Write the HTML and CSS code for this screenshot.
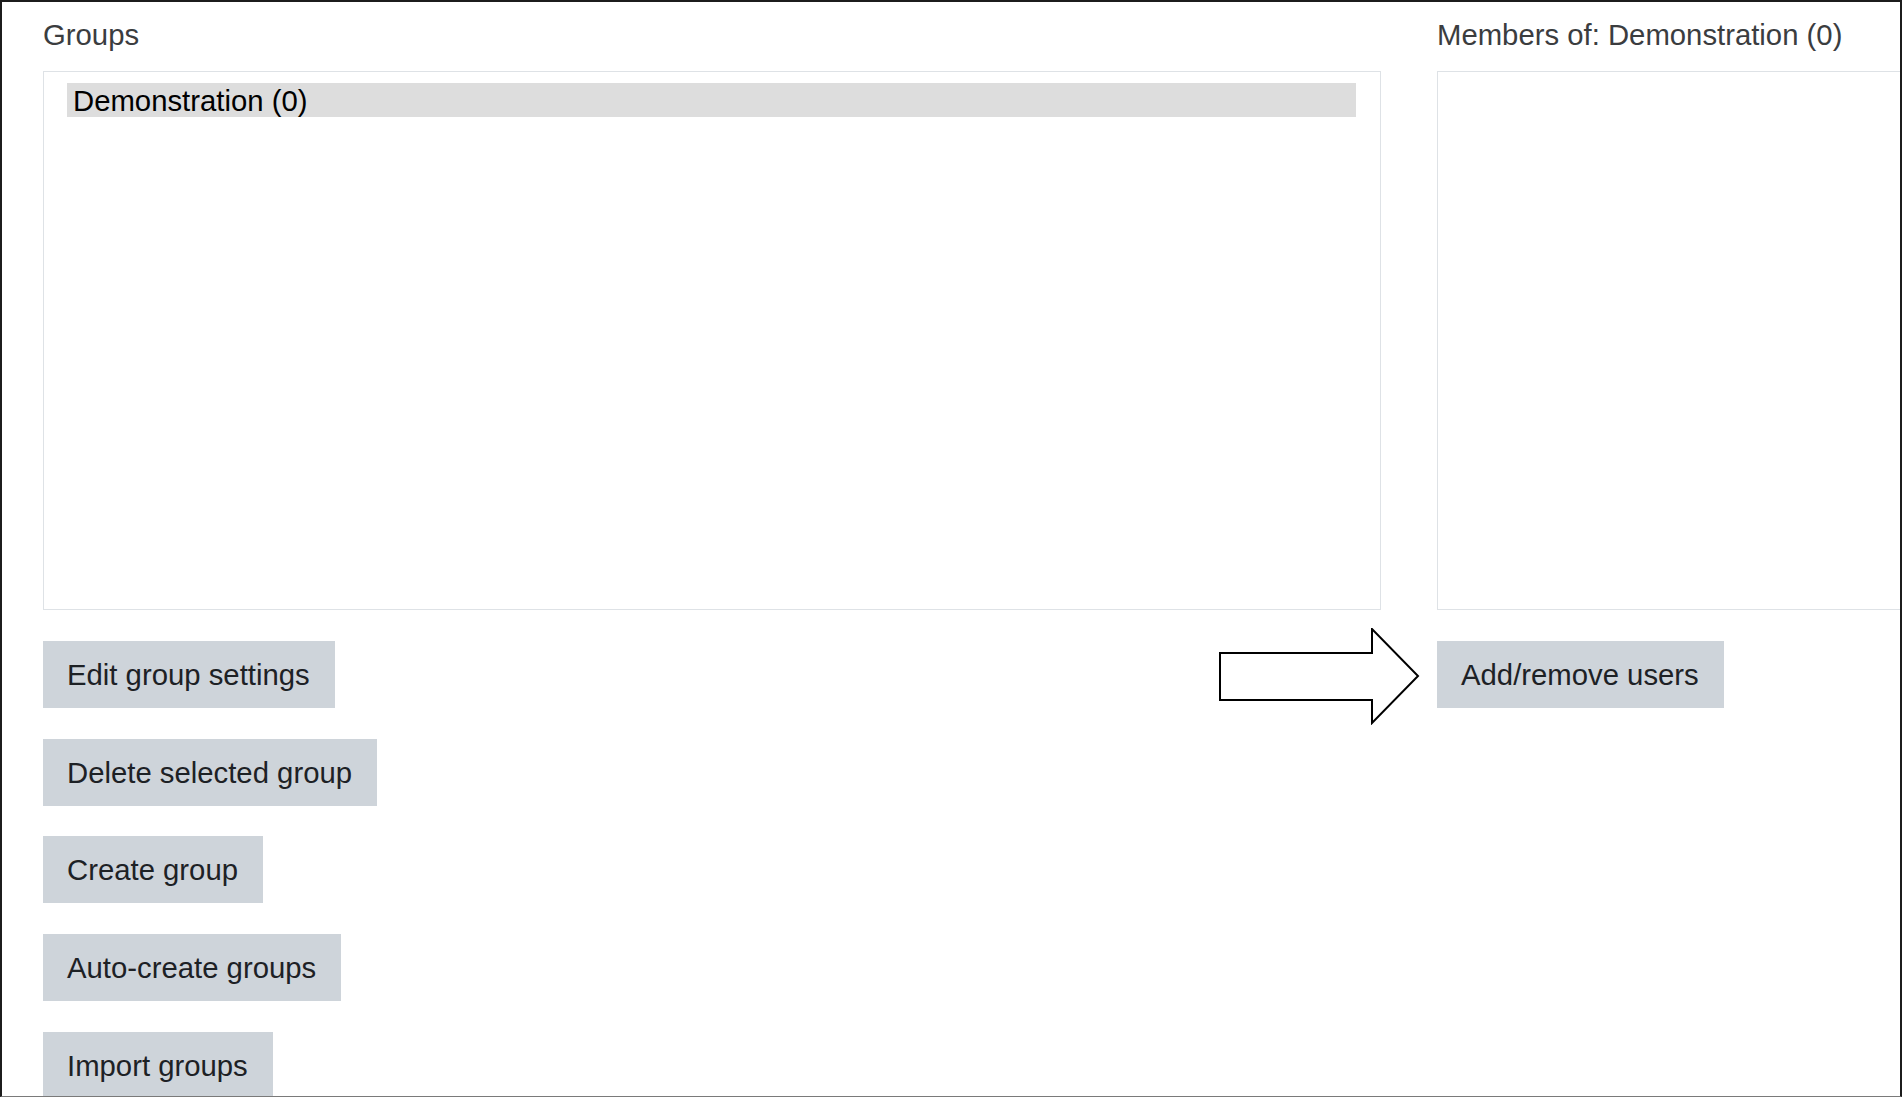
FILE: index.html
```html
<!DOCTYPE html>
<html lang="en">
<head>
<meta charset="utf-8">
<title>Groups</title>
<link rel="stylesheet" href="styles.css">
</head>
<body>
<div class="frame">
  <section class="col col-groups">
    <div class="label">Groups</div>
    <div class="listbox">
      <div class="option selected">Demonstration (0)</div>
    </div>
    <div class="actions">
      <button class="btn">Edit group settings</button>
      <button class="btn">Delete selected group</button>
      <button class="btn">Create group</button>
      <button class="btn">Auto-create groups</button>
      <button class="btn">Import groups</button>
    </div>
  </section>
  <section class="col col-members">
    <div class="label">Members of: Demonstration (0)</div>
    <div class="listbox"></div>
    <div class="actions member-actions">
      <svg class="pointer-arrow" viewBox="0 0 202 97" width="202" height="97" aria-hidden="true">
        <polygon points="2,25 154,25 154,1 200,48 154,95 154,72 2,72" fill="#ffffff" stroke="#000000" stroke-width="2" stroke-linejoin="miter"/>
      </svg>
      <button class="btn">Add/remove users</button>
    </div>
  </section>
</div>
</body>
</html>
```
FILE: styles.css
```css
html, body {
  margin: 0;
  padding: 0;
  background: #ffffff;
  overflow: hidden;
}

body {
  font-family: "Liberation Sans", Arial, sans-serif;
  font-size: 29.3px;
}

.frame {
  box-sizing: border-box;
  width: 1902px;
  height: 1097px;
  border-top: 2px solid #1c1c1c;
  border-left: 2px solid #1c1c1c;
  border-right: 2px solid #1c1c1c;
  border-bottom: 1px solid #7a7a7a;
  padding: 13px 0 0 41px;
  display: flex;
  align-items: flex-start;
  gap: 56px;
  overflow: hidden;
}

.col {
  flex: none;
  display: flex;
  flex-direction: column;
}

.col-groups {
  width: 1338px;
}

.col-members {
  width: 520px;
}

.label {
  flex: none;
  line-height: 40px;
  color: #3b3d3f;
  margin-bottom: 16px;
  white-space: nowrap;
}

.listbox {
  flex: none;
  box-sizing: border-box;
  height: 539px;
  border: 1px solid #dee2e6;
  padding: 11px 24px 0 23px;
  background: #ffffff;
}

.option {
  height: 34px;
  line-height: 35px;
  padding-left: 6px;
  color: #000000;
  white-space: nowrap;
}

.option.selected {
  background: #dddddd;
}

.actions {
  flex: none;
  margin-top: 31px;
  display: flex;
  flex-direction: column;
  align-items: flex-start;
  gap: 30.7px;
}

.member-actions {
  position: relative;
}

.btn {
  flex: none;
  height: 67px;
  padding: 0 25px 0 24px;
  margin: 0;
  border: 0;
  background: #ced4da;
  color: #1d2125;
  font-family: inherit;
  font-size: 29.3px;
  line-height: 68px;
  white-space: nowrap;
  cursor: pointer;
}

.pointer-arrow {
  position: absolute;
  left: -219px;
  top: -13px;
}
```
